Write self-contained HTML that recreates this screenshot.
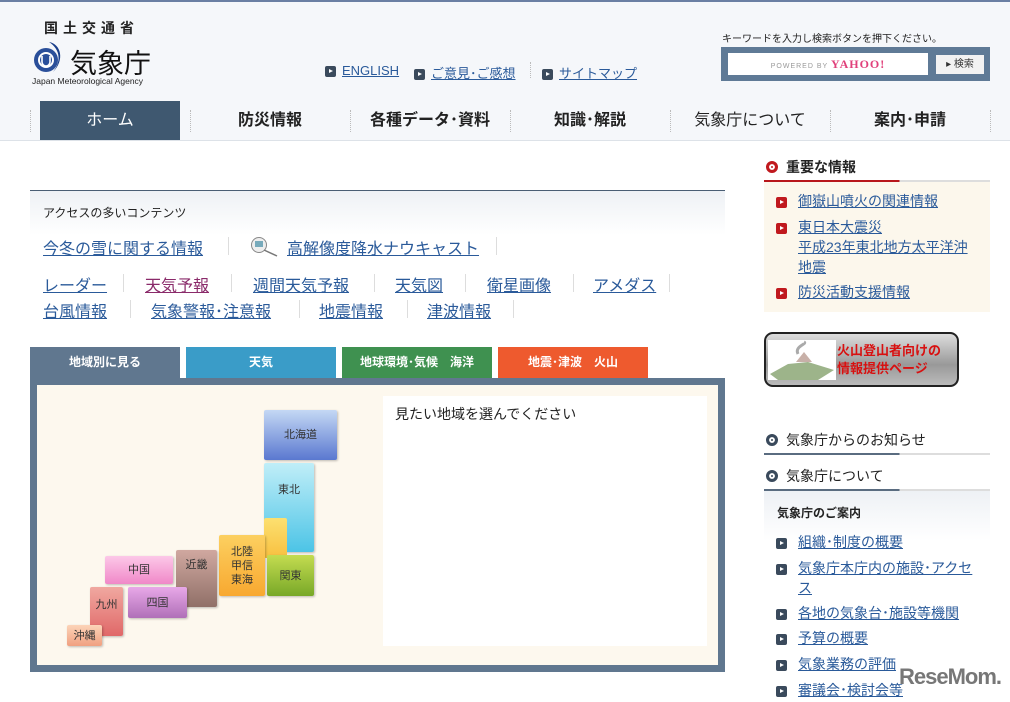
<!DOCTYPE html>
<html><head><meta charset="utf-8"><style>
*{margin:0;padding:0;box-sizing:border-box}
body{width:1010px;height:702px;overflow:hidden;background:#fff;font-family:"Liberation Sans","Noto Sans CJK JP",sans-serif;position:relative;color:#222}
.a{position:absolute;white-space:nowrap}
a,.lk{color:#2a5a9a;text-decoration:underline}
#hdr{position:absolute;left:0;top:0;width:1010px;height:141px;background:#f5f7fa;border-top:2px solid #6a7fa3;border-bottom:1px solid #dde2e8}
.nav{position:absolute;top:101px;height:39px;width:160px;text-align:center;line-height:39px;font-size:16px;font-weight:bold;color:#222}
.sep{position:absolute;top:110px;height:22px;border-left:1px dotted #bbb}
.sq{display:inline-block;width:11px;height:11px;background:#3a4a5c;border-radius:2px;position:relative;vertical-align:middle;margin-right:6px}
.sq:after{content:"";position:absolute;left:4px;top:3px;border-left:4px solid #fff;border-top:2.5px solid transparent;border-bottom:2.5px solid transparent}
.rq{background:#c0191e}
.tab{position:absolute;top:347px;height:31px;width:150px;color:#fff;font-size:12px;font-weight:bold;text-align:center;line-height:30px}
.rg{position:absolute;font-size:11px;color:#333;display:flex;align-items:center;justify-content:center;text-align:center;line-height:14px;border-radius:2px;box-shadow:1px 1px 2px rgba(0,0,0,.25)}
.l16{font-size:16px;color:#2a5a9a;text-decoration:underline}
.vb{position:absolute;width:1px;height:18px;background:#ddd}
.si{position:absolute;left:776px;font-size:14px;line-height:20px}
.si .sq{margin-right:11px}
</style></head><body>
<div id="hdr"></div>
<div class="a" style="left:44px;top:18px;font-size:14px;letter-spacing:5px;font-weight:bold;color:#222">国土交通省</div>
<svg class="a" style="left:31px;top:40px" width="38" height="34" viewBox="0 0 38 34"><path d="M18 2 C30 4 34 20 22 32 C30 22 30 10 18 2Z" fill="#1a3f8a"/><circle cx="15" cy="20" r="12" fill="#2a4f9a"/><circle cx="15" cy="20" r="8" fill="#fff"/><circle cx="15" cy="20" r="6" fill="#2a4f9a"/><path d="M11 16v6a4 4 0 0 0 8 0v-6" stroke="#fff" stroke-width="1.6" fill="none"/></svg>
<div class="a" style="left:70px;top:42px;font-size:27px;color:#111">気象庁</div>
<div class="a" style="left:32px;top:76px;font-size:8.5px;color:#222">Japan Meteorological Agency</div>
<div class="a lk" style="left:325px;top:63px;font-size:13px"><span class="sq"></span>ENGLISH</div>
<div class="a" style="left:414px;top:63px;font-size:13px"><span class="sq"></span><span class="lk">ご意見･ご感想</span></div>
<div class="a" style="left:530px;top:62px;height:16px;border-left:1px dotted #bbb"></div>
<div class="a" style="left:542px;top:63px;font-size:13px"><span class="sq"></span><span class="lk">サイトマップ</span></div>
<div class="a" style="left:722px;top:30px;font-size:10px;color:#222">キーワードを入力し検索ボタンを押下ください。</div>
<div class="a" style="left:721px;top:47px;width:269px;height:34px;background:#5f7a96"></div>
<div class="a" style="left:728px;top:53px;width:200px;height:22px;background:#fff;font-size:7px;color:#999;text-align:center;line-height:22px;letter-spacing:1px">POWERED BY <b style="color:#e0407a;font-size:12px;font-family:'Liberation Serif',serif">YAHOO!</b></div>
<div class="a" style="left:936px;top:55px;width:48px;height:19px;background:#f2f2f2;font-size:10px;color:#333;text-align:center;line-height:19px">▸ 検索</div>
<div class="a" style="left:40px;top:101px;width:140px;height:39px;background:#3f5870"></div>
<div class="nav" style="left:30px;color:#fff;font-weight:normal">ホーム</div>
<div class="nav" style="left:190px">防災情報</div>
<div class="nav" style="left:350px">各種データ･資料</div>
<div class="nav" style="left:510px">知識･解説</div>
<div class="nav" style="left:670px;font-weight:normal">気象庁について</div>
<div class="nav" style="left:830px">案内･申請</div>
<div class="sep" style="left:30px"></div><div class="sep" style="left:190px"></div><div class="sep" style="left:350px"></div><div class="sep" style="left:510px"></div><div class="sep" style="left:670px"></div><div class="sep" style="left:830px"></div><div class="sep" style="left:990px"></div>

<div class="a" style="left:30px;top:190px;width:695px;height:45px;border-top:1px solid #4a5e74;background:linear-gradient(#eef1f5,#fff)"></div>
<div class="a" style="left:43px;top:204px;font-size:12px;color:#222">アクセスの多いコンテンツ</div>
<div class="a l16" style="left:43px;top:235px">今冬の雪に関する情報</div>
<div class="vb" style="left:228px;top:237px"></div>
<svg class="a" style="left:249px;top:236px" width="36" height="22"><circle cx="10" cy="9" r="7.5" fill="#eee" stroke="#888"/><rect x="6" y="5" width="8" height="6" fill="#7ab"/><line x1="15" y1="14" x2="28" y2="20" stroke="#777" stroke-width="1.5"/></svg>
<div class="a l16" style="left:287px;top:235px">高解像度降水ナウキャスト</div>
<div class="vb" style="left:496px;top:237px"></div>

<div class="a l16" style="left:43px;top:272px">レーダー</div><div class="vb" style="left:123px;top:274px"></div>
<div class="a l16" style="left:145px;top:272px;color:#8a2a6a">天気予報</div><div class="vb" style="left:231px;top:274px"></div>
<div class="a l16" style="left:253px;top:272px">週間天気予報</div><div class="vb" style="left:374px;top:274px"></div>
<div class="a l16" style="left:395px;top:272px">天気図</div><div class="vb" style="left:465px;top:274px"></div>
<div class="a l16" style="left:487px;top:272px">衛星画像</div><div class="vb" style="left:573px;top:274px"></div>
<div class="a l16" style="left:593px;top:272px">アメダス</div><div class="vb" style="left:669px;top:274px"></div>
<div class="a l16" style="left:43px;top:298px">台風情報</div><div class="vb" style="left:130px;top:300px"></div>
<div class="a l16" style="left:151px;top:298px">気象警報･注意報</div><div class="vb" style="left:299px;top:300px"></div>
<div class="a l16" style="left:319px;top:298px">地震情報</div><div class="vb" style="left:407px;top:300px"></div>
<div class="a l16" style="left:427px;top:298px">津波情報</div><div class="vb" style="left:513px;top:300px"></div>

<div class="tab" style="left:30px;background:#60778f">地域別に見る</div>
<div class="tab" style="left:186px;background:#3a9cc8">天気</div>
<div class="tab" style="left:342px;background:#3f9150">地球環境･気候　海洋</div>
<div class="tab" style="left:498px;background:#ee5a2e">地震･津波　火山</div>
<div class="a" style="left:30px;top:378px;width:695px;height:294px;background:#fdf8ee;border:7px solid #60778f"></div>
<div class="a" style="left:383px;top:396px;width:324px;height:250px;background:#fff"></div>
<div class="a" style="left:395px;top:404px;font-size:14px;color:#222">見たい地域を選んでください</div>

<div class="rg" style="left:264px;top:410px;width:73px;height:50px;background:linear-gradient(#c4d8f4,#5a78d0)">北海道</div>
<div class="rg" style="left:264px;top:463px;width:50px;height:89px;background:linear-gradient(#c0eef8,#4cc4e6);align-items:flex-start;padding-top:20px">東北</div>
<div class="rg" style="left:264px;top:518px;width:23px;height:40px;background:linear-gradient(#fce070,#f8c040);box-shadow:none"></div>
<div class="rg" style="left:219px;top:535px;width:46px;height:61px;background:linear-gradient(#fcd060,#f8a830)">北陸<br>甲信<br>東海</div>
<div class="rg" style="left:267px;top:555px;width:47px;height:41px;background:linear-gradient(#c4dc50,#78a828)">関東</div>
<div class="rg" style="left:176px;top:550px;width:41px;height:57px;background:linear-gradient(#d0a8a0,#907068);align-items:flex-start;padding-top:8px">近畿</div>
<div class="rg" style="left:105px;top:556px;width:68px;height:28px;background:linear-gradient(#fcc8e8,#f088c8)">中国</div>
<div class="rg" style="left:90px;top:587px;width:33px;height:49px;background:linear-gradient(#f0a8a0,#e06868);align-items:flex-start;padding-top:11px">九州</div>
<div class="rg" style="left:128px;top:587px;width:59px;height:31px;background:linear-gradient(#e8a8e8,#b070b8)">四国</div>
<div class="rg" style="left:67px;top:625px;width:35px;height:21px;background:linear-gradient(#fcd4b8,#f0a080)">沖縄</div>

<!-- sidebar -->
<div class="a" style="left:764px;top:157px;font-size:14px;font-weight:bold"><span style="display:inline-block;width:12px;height:12px;border-radius:50%;background:#c0191e;border:3px solid #c0191e;box-shadow:inset 0 0 0 2px #fff;vertical-align:-1px;margin:0 8px 0 2px"></span>重要な情報</div>
<div class="a" style="left:764px;top:180px;width:226px;height:2px;background:linear-gradient(90deg,#b8161b 60%,#ddd 60%)"></div>
<div class="a" style="left:764px;top:182px;width:226px;height:130px;background:#fcf7ec"></div>
<div class="si" style="top:191px"><span class="sq rq"></span><span class="lk">御嶽山噴火の関連情報</span></div>
<div class="si" style="top:217px"><span class="sq rq"></span><span class="lk">東日本大震災</span><br><span class="lk" style="margin-left:22px">平成23年東北地方太平洋沖</span><br><span class="lk" style="margin-left:22px">地震</span></div>
<div class="si" style="top:282px"><span class="sq rq"></span><span class="lk">防災活動支援情報</span></div>
<div class="a" style="left:764px;top:332px;width:195px;height:55px;border:2px solid #222;border-radius:9px;background:linear-gradient(#ddd,#999 60%,#bbb);overflow:hidden"></div>
<div class="a" style="left:768px;top:340px;width:68px;height:40px;background:#fff"><svg width="68" height="40"><path d="M2 34 L20 24 L40 22 L66 30 L50 40 L10 40Z" fill="#9db48a"/><path d="M28 22 L36 12 L44 22Z" fill="#c8b0a8"/><path d="M30 14 C26 6 40 4 36 2" stroke="#aaa" fill="none" stroke-width="3"/></svg></div>
<div class="a" style="left:837px;top:342px;font-size:13px;font-weight:bold;color:#d81010;line-height:18px">火山登山者向けの<br>情報提供ページ</div>

<div class="a" style="left:764px;top:430px;font-size:14px"><span style="display:inline-block;width:12px;height:12px;border-radius:50%;background:#3a4a5c;border:3px solid #3a4a5c;box-shadow:inset 0 0 0 2px #fff;vertical-align:-1px;margin:0 8px 0 2px"></span>気象庁からのお知らせ</div>
<div class="a" style="left:764px;top:453px;width:226px;height:2px;background:linear-gradient(90deg,#5a6c80 60%,#ddd 60%)"></div>
<div class="a" style="left:764px;top:466px;font-size:14px"><span style="display:inline-block;width:12px;height:12px;border-radius:50%;background:#3a4a5c;border:3px solid #3a4a5c;box-shadow:inset 0 0 0 2px #fff;vertical-align:-1px;margin:0 8px 0 2px"></span>気象庁について</div>
<div class="a" style="left:764px;top:489px;width:226px;height:2px;background:linear-gradient(90deg,#5a6c80 60%,#ddd 60%)"></div>
<div class="a" style="left:764px;top:491px;width:226px;height:50px;background:linear-gradient(#eef1f5,#fff)"></div>
<div class="a" style="left:777px;top:504px;font-size:12px;font-weight:bold">気象庁のご案内</div>
<div class="si" style="top:532px"><span class="sq"></span><span class="lk">組織･制度の概要</span></div>
<div class="si" style="top:558px"><span class="sq"></span><span class="lk">気象庁本庁内の施設･アクセ</span><br><span class="lk" style="margin-left:22px">ス</span></div>
<div class="si" style="top:603px"><span class="sq"></span><span class="lk">各地の気象台･施設等機関</span></div>
<div class="si" style="top:628px"><span class="sq"></span><span class="lk">予算の概要</span></div>
<div class="si" style="top:654px"><span class="sq"></span><span class="lk">気象業務の評価</span></div>
<div class="si" style="top:680px"><span class="sq"></span><span class="lk">審議会･検討会等</span></div>
<div class="a" style="left:899px;top:664px;font-size:22px;font-weight:bold;color:#777;letter-spacing:-1px;text-shadow:0 0 2px #fff">ReseMom.</div>
</body></html>
